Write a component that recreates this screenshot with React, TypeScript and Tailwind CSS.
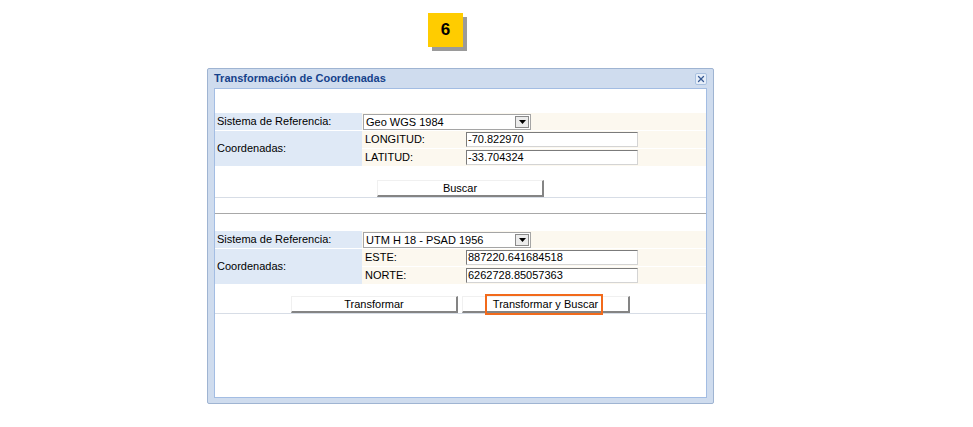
import { X } from 'lucide-react';

const font = { fontFamily: '"Liberation Sans", Arial, sans-serif' };

function TextBox({ value }: { value: string }) {
  return (
    <div className="h-[15px] w-[172px] border-t border-l border-t-[#7b7b7b] border-l-[#7b7b7b] border-r border-b border-r-[#d4d4d4] border-b-[#d4d4d4] bg-white pl-[1px] text-[11px] leading-[13px] text-black">
      {value}
    </div>
  );
}

function Select({ value }: { value: string }) {
  return (
    <div className="flex h-[16px] w-[168px] items-center border border-[#a5a5a5] bg-white">
      <span className="flex-1 pl-[2px] text-[11px] leading-[14px] text-black">{value}</span>
      <div className="mr-[1px] flex h-[12px] w-[14px] items-center justify-center border border-[#8a8a8a] bg-[#ececec]">
        <svg width="7" height="4" viewBox="0 0 7 4">
          <path d="M0 0h7L3.5 4z" fill="#000" />
        </svg>
      </div>
    </div>
  );
}

function Btn({ label, width, highlight }: { label: string; width: string; highlight?: boolean }) {
  return (
    <div
      className={`relative flex h-[17px] ${width} items-center justify-center border-l border-t border-l-[#f0f0f0] border-t-[#f0f0f0] border-r-2 border-b-2 border-r-[#848484] border-b-[#848484] bg-white text-[11px] text-black`}
    >
      {label}
      {highlight && (
        <div className="absolute left-[22px] top-[-3px] h-[21px] w-[118px] border-2 border-[#f26a1b]" />
      )}
    </div>
  );
}

function Section({
  system,
  a,
  av,
  b,
  bv,
}: {
  system: string;
  a: string;
  av: string;
  b: string;
  bv: string;
}) {
  return (
    <div className="grid grid-cols-[147px_1fr] gap-y-[1px] bg-white text-[11px] text-black">
      <div className="flex h-[17px] items-center bg-[#dfe9f6] pl-[2px]">Sistema de Referencia:</div>
      <div className="flex h-[17px] items-center bg-[#fcf8ef] pl-[1px]">
        <Select value={system} />
      </div>
      <div className="row-span-2 flex items-center bg-[#dfe9f6] pl-[2px]">Coordenadas:</div>
      <div className="flex h-[17px] items-center bg-[#fcf8ef]">
        <span className="w-[104px] pl-[3px]">{a}</span>
        <TextBox value={av} />
      </div>
      <div className="flex h-[17px] items-center bg-[#fcf8ef]">
        <span className="w-[104px] pl-[3px]">{b}</span>
        <TextBox value={bv} />
      </div>
    </div>
  );
}

export default function App() {
  return (
    <div className="h-[427px] w-[973px] overflow-hidden bg-white" style={font}>
      <div className="flex pl-[428px] pt-[13px]">
        <div className="flex h-[34px] w-[35px] items-center justify-center bg-[#ffcc00] text-[17px] font-bold text-black shadow-[4px_4px_0_#9a9a9a]">
          6
        </div>
      </div>
      <div className="ml-[207px] mt-[21px] flex h-[336px] w-[507px] flex-col rounded-[2px] border border-[#9fb4d2] bg-[#cfdcee] px-[6px] pb-[5px]">
        <div className="flex h-[19px] items-center justify-between">
          <span className="text-[11px] font-bold text-[#15428b]">Transformación de Coordenadas</span>
          <div className="flex h-[12px] w-[12px] items-center justify-center rounded-[2px] border border-[#a9c1e0] bg-[#e6eef9]">
            <X size={10} strokeWidth={3} color="#3a5c95" />
          </div>
        </div>
        <div className="flex flex-1 flex-col border border-[#a3bde3] bg-white">
          <div className="h-[24px]" />
          <Section system="Geo WGS 1984" a="LONGITUD:" av="-70.822970" b="LATITUD:" bv="-33.704324" />
          <div className="flex justify-center pt-[14px]">
            <Btn label="Buscar" width="w-[167px]" />
          </div>
          <div className="h-[16px] border-t border-[#d7dde6]" />
          <div className="h-[18px] border-t border-[#a8a8a8]" />
          <Section
            system="UTM H 18 - PSAD 1956"
            a="ESTE:"
            av="887220.641684518"
            b="NORTE:"
            bv="6262728.85057363"
          />
          <div className="flex justify-center gap-[4px] pt-[12px]">
            <Btn label="Transformar" width="w-[167px]" />
            <Btn label="Transformar y Buscar" width="w-[168px]" highlight />
          </div>
          <div className="border-t border-[#d7dde6]" />
        </div>
      </div>
    </div>
  );
}
